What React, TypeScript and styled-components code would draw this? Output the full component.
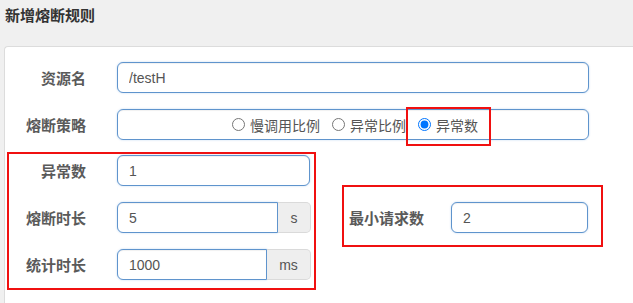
import styled, { createGlobalStyle } from 'styled-components';

const GlobalStyle = createGlobalStyle`
  html, body {
    margin: 0;
    padding: 0;
    background: #f0f0f0;
    overflow: hidden;
  }
  body {
    font-family: 'Liberation Sans', 'Noto Sans CJK SC', sans-serif;
    color: #555;
  }
`;

const Page = styled.div`
  width: 633px;
  height: 303px;
  overflow: hidden;
  background: #f0f0f0;
`;

const Header = styled.div`
  height: 46px;
  box-sizing: border-box;
  padding: 6px 5px;
  font-size: 15px;
  line-height: 20px;
  font-weight: 700;
  color: #333;
`;

const Panel = styled.div`
  margin-left: 4px;
  min-height: 260px;
  background: #fff;
  border: 1px solid #dcdcdc;
  border-right: none;
  border-bottom: none;
  border-radius: 4px 0 0 0;
  padding: 15px 0 0 0;
`;

const Rows = styled.div`
  display: flex;
  flex-direction: column;
  gap: 16px;
`;

const Row = styled.div`
  display: flex;
  align-items: center;
  height: 31px;
`;

const Label = styled.label<{ $width?: number; $gap: number }>`
  ${p => (p.$width ? `width: ${p.$width}px; text-align: right;` : '')}
  margin-right: ${p => p.$gap}px;
  flex-shrink: 0;
  font-size: 15px;
  font-weight: 700;
  color: #5a5a5a;
  white-space: nowrap;
`;

const Input = styled.input<{ $width?: number; $joined?: boolean }>`
  box-sizing: border-box;
  ${p => (p.$width ? `width: ${p.$width}px;` : 'flex: 1; min-width: 0;')}
  height: 31px;
  padding: 0 11px;
  font-family: inherit;
  font-size: 14px;
  color: #555;
  background: #fff;
  border: 1px solid #5f94cd;
  border-radius: ${p => (p.$joined ? '6px 0 0 6px' : '6px')};
  box-shadow: inset 0 1px 1px rgba(0, 0, 0, 0.06), 0 0 2px rgba(102, 160, 220, 0.45);
  outline: none;
`;

const StrategyBox = styled.div`
  box-sizing: border-box;
  width: 472px;
  height: 31px;
  display: flex;
  align-items: center;
  justify-content: center;
  gap: 12px;
  padding-left: 4px;
  border: 1px solid #5f94cd;
  border-radius: 6px;
  box-shadow: inset 0 1px 1px rgba(0, 0, 0, 0.06), 0 0 2px rgba(102, 160, 220, 0.45);
`;

const RadioItem = styled.label<{ $marked?: boolean }>`
  position: relative;
  display: inline-flex;
  align-items: center;
  gap: 5px;
  font-size: 14px;
  color: #555;
  white-space: nowrap;

  input {
    margin: 0;
    width: 13px;
    height: 13px;
  }

  ${p =>
    p.$marked
      ? `&::after {
    content: '';
    position: absolute;
    left: -12px;
    right: -13px;
    top: -8px;
    bottom: -11px;
    border: 2px solid #f01010;
    pointer-events: none;
  }`
      : ''}
`;

const Lower = styled.div`
  display: flex;
  align-items: flex-start;
  gap: 26px;
  margin: 12px 0 0 2px;
`;

const MarkBox = styled.div<{ $top?: number; $pad: string }>`
  display: flex;
  flex-direction: column;
  gap: 16px;
  margin-top: ${p => p.$top ?? 0}px;
  padding: ${p => p.$pad};
  border: 2px solid #f01010;
`;

const InputGroup = styled.div`
  display: flex;
  width: 194px;
  height: 31px;
`;

const Addon = styled.span<{ $width: number }>`
  box-sizing: border-box;
  width: ${p => p.$width}px;
  display: flex;
  align-items: center;
  justify-content: center;
  font-size: 14px;
  color: #555;
  background: #eee;
  border: 1px solid #dadada;
  border-left: none;
  border-radius: 0 5px 5px 0;
`;

const strategies = ['慢调用比例', '异常比例', '异常数'];

export default function App() {
  return (
    <Page>
      <GlobalStyle />
      <Header>新增熔断规则</Header>
      <Panel>
        <Rows>
          <Row>
            <Label $width={81} $gap={31}>资源名</Label>
            <Input $width={472} defaultValue="/testH" readOnly />
          </Row>
          <Row>
            <Label $width={81} $gap={31}>熔断策略</Label>
            <StrategyBox>
              {strategies.map((s, i) => (
                <RadioItem key={s} $marked={i === 2}>
                  <input type="radio" name="strategy" defaultChecked={i === 2} />
                  {s}
                </RadioItem>
              ))}
            </StrategyBox>
          </Row>
        </Rows>
        <Lower>
          <MarkBox $pad="1px 3px 8px 0">
            <Row>
              <Label $width={77} $gap={31}>异常数</Label>
              <Input $width={193} defaultValue="1" readOnly />
            </Row>
            <Row>
              <Label $width={77} $gap={31}>熔断时长</Label>
              <InputGroup>
                <Input $joined defaultValue="5" readOnly />
                <Addon $width={33}>s</Addon>
              </InputGroup>
            </Row>
            <Row>
              <Label $width={77} $gap={31}>统计时长</Label>
              <InputGroup>
                <Input $joined defaultValue="1000" readOnly />
                <Addon $width={44}>ms</Addon>
              </InputGroup>
            </Row>
          </MarkBox>
          <MarkBox $top={33} $pad="15px 13px 12px 5px">
            <Row>
              <Label $gap={27}>最小请求数</Label>
              <Input $width={137} defaultValue="2" readOnly />
            </Row>
          </MarkBox>
        </Lower>
      </Panel>
    </Page>
  );
}
